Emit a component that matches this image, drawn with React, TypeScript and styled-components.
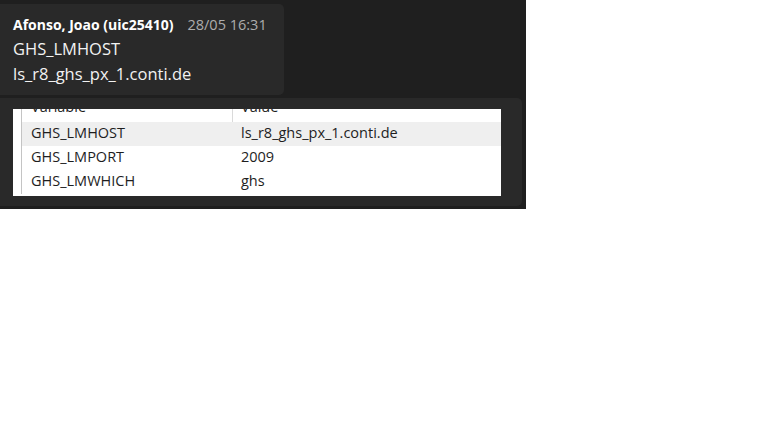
import React from "react";
import styled, { createGlobalStyle } from "styled-components";

const GlobalStyle = createGlobalStyle`
  html, body { margin: 0; padding: 0; background: #ffffff; }
  * { box-sizing: border-box; }
`;

const Stage = styled.div`
  width: 526px;
  height: 209px;
  background: #1f1f1f;
  padding-top: 4px;
  display: flex;
  flex-direction: column;
  gap: 3px;
  font-family: "Open Sans", "Noto Sans", sans-serif;
`;

const Bubble = styled.div`
  width: 284px;
  height: 91px;
  background: #292929;
  border-radius: 0 5px 5px 0;
  padding: 10px 13px 0;
  display: flex;
  flex-direction: column;
`;

const Header = styled.div`
  display: flex;
  align-items: baseline;
  gap: 14px;
  height: 22px;
  line-height: 22px;
`;

const Author = styled.span`
  color: #ffffff;
  font-weight: 700;
  font-size: 14px;
`;

const Time = styled.span`
  color: #adadad;
  font-size: 14.5px;
`;

const Line = styled.div`
  color: #f2f2f2;
  font-size: 16.5px;
  line-height: 25px;
`;

const Attachment = styled.div`
  width: 522px;
  height: 108px;
  background: #292929;
  border-radius: 0 5px 5px 0;
  padding: 11px 21px 10px 13px;
`;

const Shot = styled.div`
  width: 488px;
  height: 87px;
  background: #ffffff;
  overflow: hidden;
  display: grid;
  grid-template-columns: 9px 210px 1fr;
  grid-template-rows: 13px repeat(3, 24px);
  font-family: "Open Sans", "Noto Sans", sans-serif;
  font-size: 14.5px;
  color: #1e1e1e;
`;

const Gutter = styled.div`
  grid-row: 1 / span 4;
  grid-column: 1;
  border-right: 1px solid #c4c4c4;
`;

const HeadCell = styled.div<{ $divider?: boolean }>`
  overflow: hidden;
  padding-left: ${(p) => (p.$divider ? "8px" : "9px")};
  border-left: ${(p) => (p.$divider ? "1px solid #dadada" : "none")};
  & > span {
    display: block;
    line-height: 24px;
    margin-top: -14px;
  }
`;

const Cell = styled.div<{ $hl?: boolean }>`
  padding-left: 9px;
  line-height: 22px;
  height: 24px;
  background: ${(p) => (p.$hl ? "#efefef" : "transparent")};
  white-space: nowrap;
`;

const rows: [string, string][] = [
  ["GHS_LMHOST", "ls_r8_ghs_px_1.conti.de"],
  ["GHS_LMPORT", "2009"],
  ["GHS_LMWHICH", "ghs"],
];

export default function App() {
  return (
    <>
      <GlobalStyle />
      <Stage>
        <Bubble>
          <Header>
            <Author>Afonso, Joao (uic25410)</Author>
            <Time>28/05 16:31</Time>
          </Header>
          <Line>GHS_LMHOST</Line>
          <Line>ls_r8_ghs_px_1.conti.de</Line>
        </Bubble>
        <Attachment>
          <Shot>
            <Gutter />
            <HeadCell>
              <span>Variable</span>
            </HeadCell>
            <HeadCell $divider>
              <span>Value</span>
            </HeadCell>
            {rows.map(([k, v], i) => (
              <React.Fragment key={k}>
                <Cell $hl={i === 0}>{k}</Cell>
                <Cell $hl={i === 0}>{v}</Cell>
              </React.Fragment>
            ))}
          </Shot>
        </Attachment>
      </Stage>
    </>
  );
}
